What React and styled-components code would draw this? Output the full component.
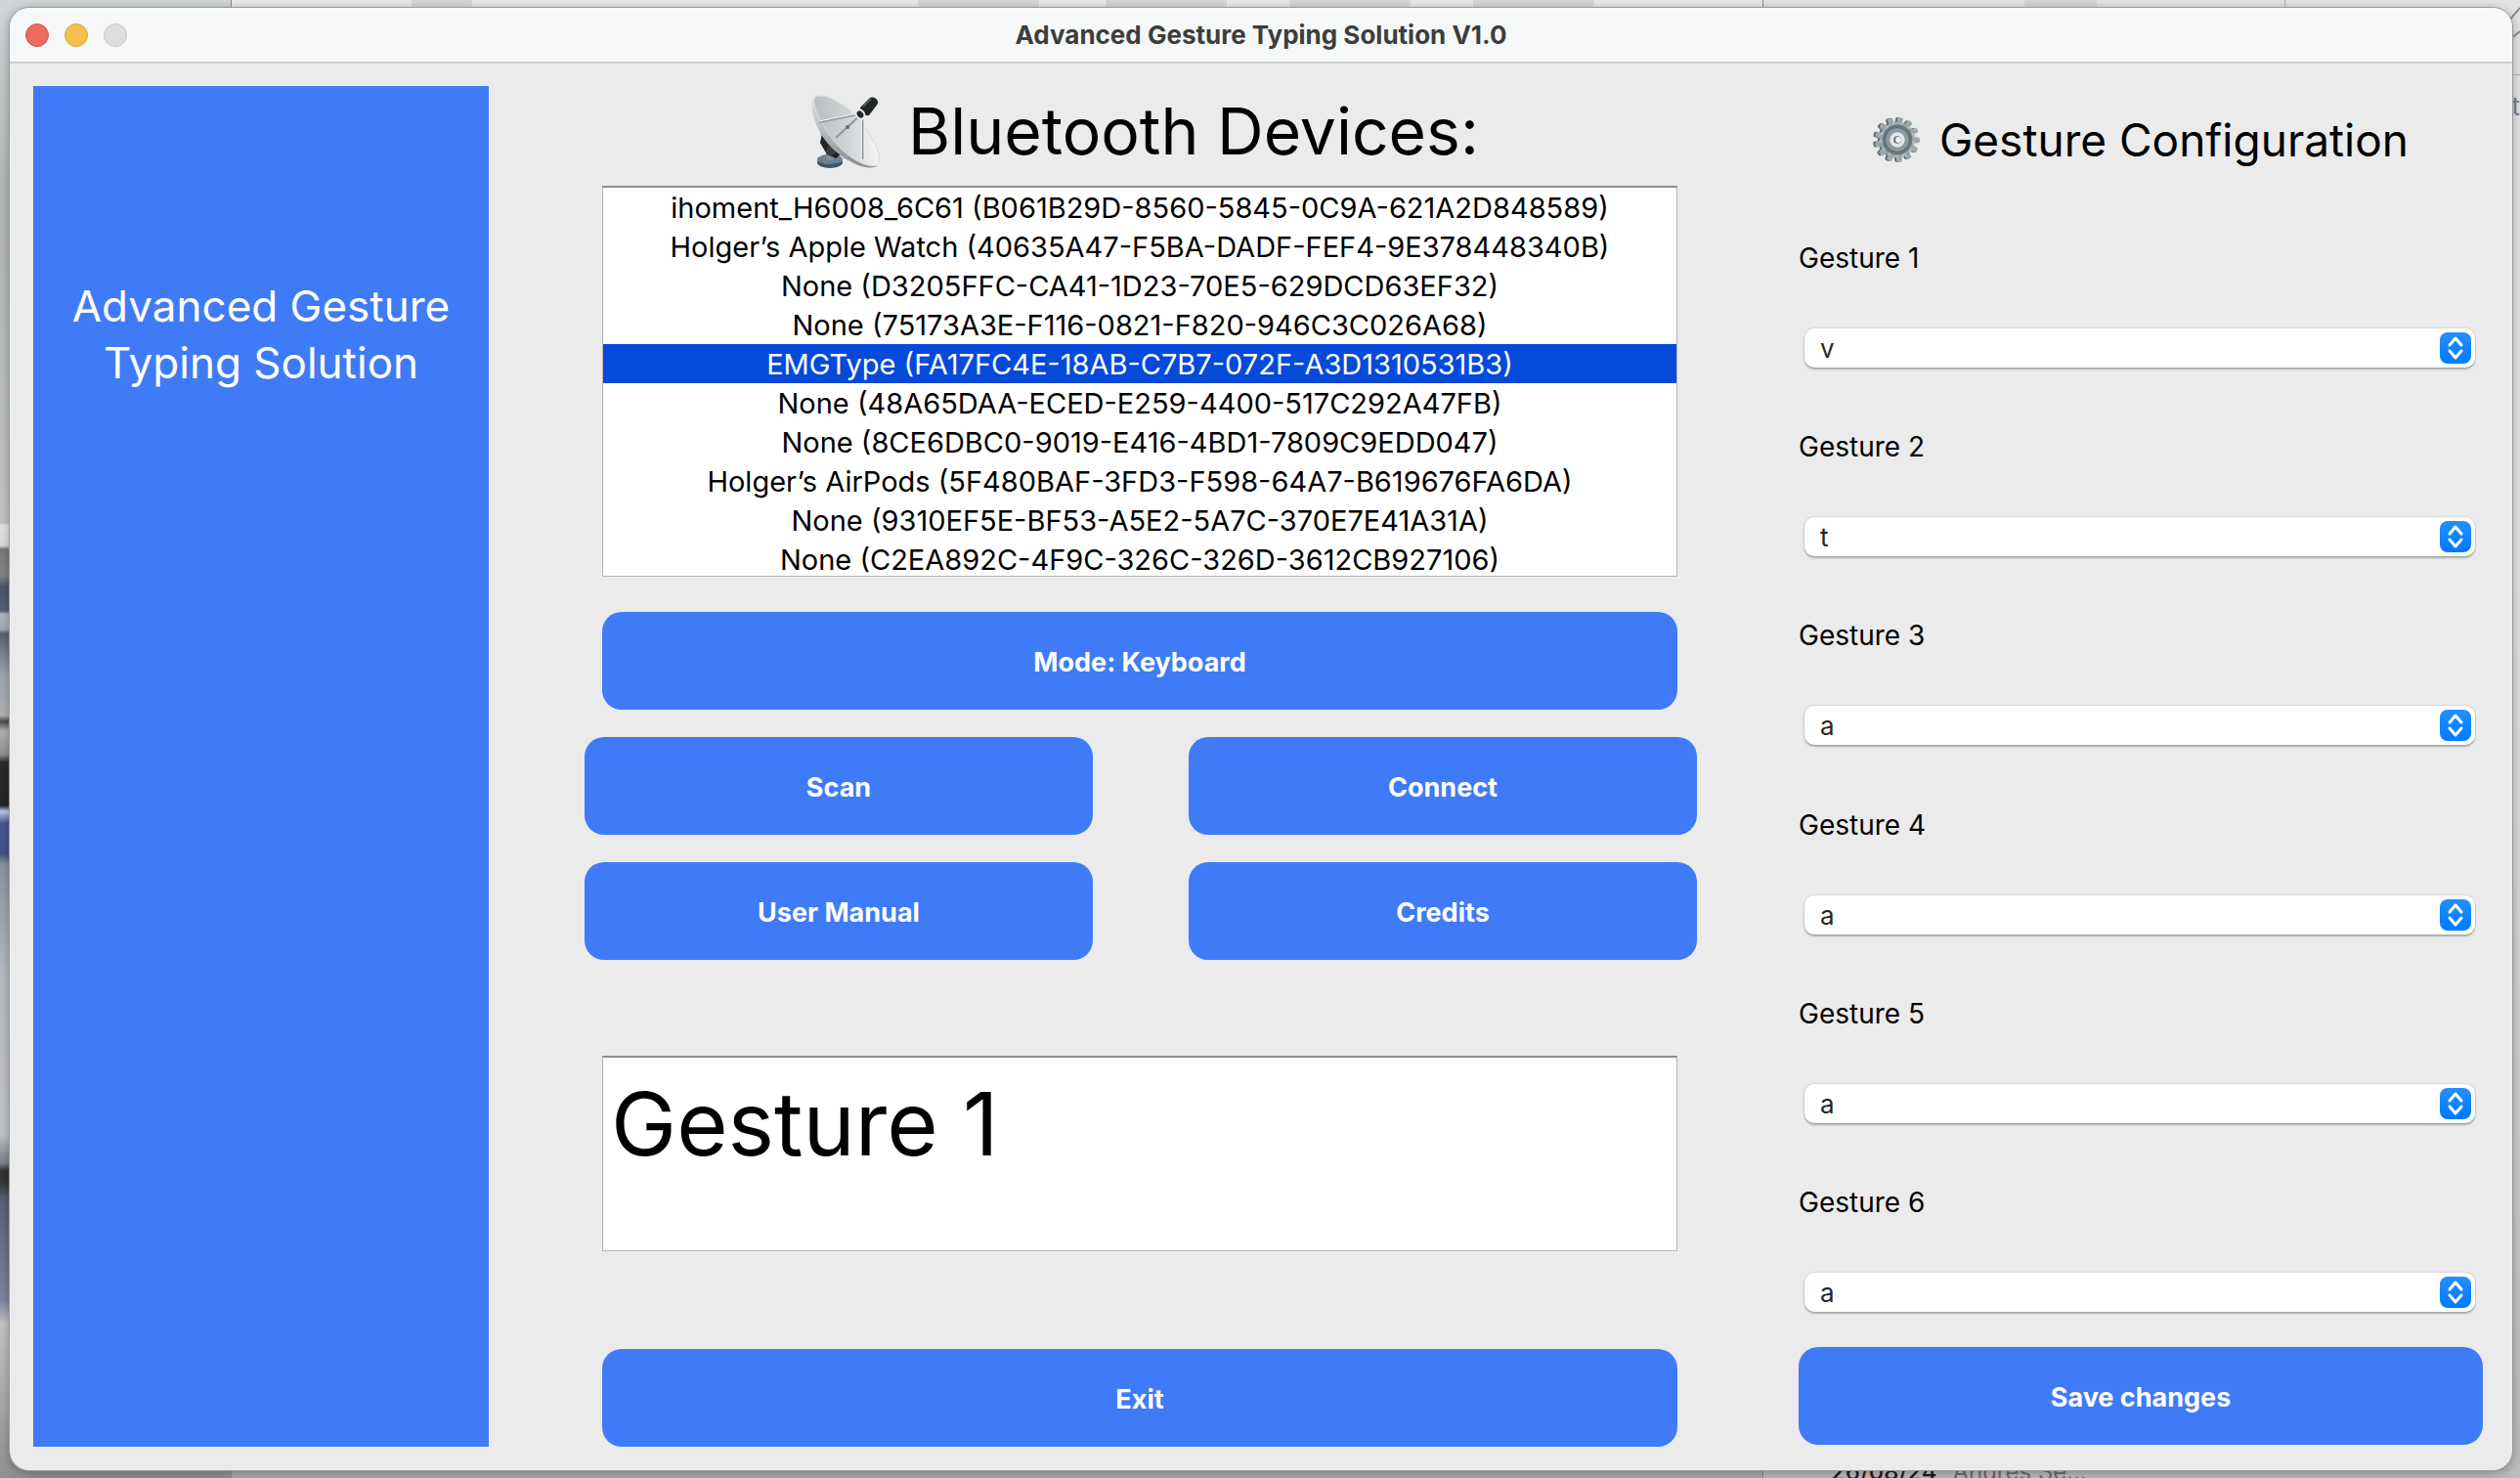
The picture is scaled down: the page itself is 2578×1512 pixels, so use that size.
import React from "react";
import styled, { createGlobalStyle } from "styled-components";

const GlobalStyle = createGlobalStyle`
  * { box-sizing: border-box; }
  body {
    margin: 0;
    font-family: Inter, "Noto Sans", sans-serif;
    color: #000;
    background: #b9bcbb;
  }
`;

const blue = "#3f7bf6";

const Desktop = styled.div`
  position: relative;
  min-height: 100vh;
  padding: 8px 8px 8px 10px;
  display: flex;
  overflow: hidden;
  background: linear-gradient(
    180deg,
    #d3d6d9 0px,
    #b4b8b8 200px,
    #c2c5c4 535px,
    #e4e6e6 537px,
    #dddfdf 558px,
    #77797a 562px,
    #85878a 588px,
    #4c5768 600px,
    #566174 625px,
    #b3b8c0 628px,
    #a5abb5 644px,
    #56616d 648px,
    #a0a6af 690px,
    #b1b3b5 732px,
    #4a4b4c 738px,
    #b0b2b4 748px,
    #8f9192 772px,
    #2a2b2c 780px,
    #252628 824px,
    #c7cdec 830px,
    #4a5791 842px,
    #46528a 874px,
    #8d95a0 884px,
    #b9bdc1 1000px,
    #c3c6c8 1160px,
    #7c8084 1190px,
    #2f3132 1198px,
    #383a3b 1212px,
    #59606f 1225px,
    #8085a0 1330px,
    #c4c6c5 1354px,
    #aeb1b0 1420px,
    #8f9191 1512px
  );
`;

const BackWindow = styled.div`
  position: absolute;
  top: 0;
  bottom: 0;
  left: ${(p) => p.$left};
  right: ${(p) => p.$right};
  border-left: 1px solid #8c8c8c;
  background: linear-gradient(180deg, ${(p) => p.$top} 0, ${(p) => p.$top} 40%, ${(p) => p.$bottom} 100%);
`;

const BackPill = styled.div`
  position: absolute;
  top: -32px;
  left: ${(p) => p.$left};
  width: ${(p) => p.$width};
  height: 48px;
  border-radius: 12px;
  background: #d6d9d8;
`;

const BackDivider = styled.div`
  position: absolute;
  top: 0;
  left: 533px;
  width: 1px;
  height: 8px;
  background: #b4b6b5;
`;

const BackRule = styled.div`
  position: absolute;
  top: 76px;
  right: 0;
  width: 8px;
  height: 1px;
  background: #b4b6b5;
`;

const BackMessage = styled.div`
  position: absolute;
  left: 69px;
  bottom: -8px;
  display: flex;
  gap: 16px;
  font-size: 24px;
  line-height: 28px;
  font-weight: 500;
  color: #1d1d1d;
  span + span { font-weight: 400; color: #6c6c6c; }
`;

const BackGlyph = styled.span`
  position: absolute;
  right: 0;
  top: 94px;
  font-size: 26px;
  line-height: 30px;
  color: #808080;
`;

const BackIcon = styled.svg`
  position: absolute;
  top: 6px;
  right: 0;
  width: 12px;
  height: 34px;
`;

const Window = styled.main`
  position: relative;
  flex: 1;
  min-width: 0;
  display: flex;
  flex-direction: column;
  overflow: hidden;
  border-radius: 20px;
  background: #ebebeb;
  box-shadow: 0 0 0 1px #9a9a9a, 0 2px 12px rgba(0, 0, 0, 0.35);
`;

const TitleBar = styled.header`
  display: grid;
  grid-template-columns: 1fr auto 1fr;
  align-items: center;
  height: 57px;
  padding: 0 16px;
  border-bottom: 2px solid #cbcdcc;
  background: #f6f8f7;
`;

const Lights = styled.div`
  display: flex;
  gap: 16px;
`;

const Light = styled.button`
  width: 24px;
  height: 24px;
  padding: 0;
  border: 1px solid ${(p) => p.$edge};
  border-radius: 50%;
  background: ${(p) => p.$fill};
`;

const WindowTitle = styled.h1`
  margin: 0;
  font-size: 26px;
  line-height: 32px;
  font-weight: 700;
  color: #3c3d3d;
`;

const Content = styled.div`
  flex: 1;
  display: grid;
  grid-template-columns: minmax(0, 466fr) minmax(0, 1138fr) minmax(0, 706fr);
  column-gap: 98px;
  padding: 23px 30px 24px 24px;
`;

const Sidebar = styled.aside`
  padding: 196px 24px 0;
  background: ${blue};
  color: #fff;
  font-size: 44px;
  line-height: 58px;
  text-align: center;
`;

const Center = styled.section`
  display: flex;
  flex-direction: column;
`;

const Inset = styled.div`
  display: flex;
  flex-direction: column;
  padding: 0 20px 0 18px;
`;

const DevicesHeading = styled.h2`
  display: flex;
  align-items: center;
  justify-content: center;
  gap: 28px;
  height: 102px;
  margin: 0;
  padding: 0 0 10px 8px;
  font-size: 66px;
  line-height: 92px;
  font-weight: 400;
`;

const DeviceList = styled.ul`
  height: 400px;
  margin: 0 0 36px;
  padding: 0;
  overflow: hidden;
  list-style: none;
  border: 1px solid #b4b4b4;
  border-top: 2px solid #8e8e8e;
  background: #fff;
`;

const Device = styled.li`
  height: 40px;
  font-size: 29px;
  line-height: 42px;
  text-align: center;
  white-space: nowrap;
  color: ${(p) => (p.$selected ? "#fff" : "#000")};
  background: ${(p) => (p.$selected ? "#064ad9" : "transparent")};
`;

const Button = styled.button`
  width: 100%;
  height: 100px;
  padding: 4px 0 0;
  border: 0;
  border-radius: 20px;
  background: ${blue};
  color: #fff;
  font: 700 27px/34px Inter, "Noto Sans", sans-serif;
`;

const ButtonGrid = styled.div`
  display: grid;
  grid-template-columns: 1fr 1fr;
  gap: 28px 98px;
  margin: 28px 0 98px;
`;

const Output = styled.textarea`
  display: block;
  width: 100%;
  height: 200px;
  margin: 0 0 100px;
  padding: 10px 8px;
  resize: none;
  outline: 0;
  border: 1px solid #b4b4b4;
  border-top: 2px solid #8e8e8e;
  border-radius: 0;
  background: #fff;
  color: #000;
  font: 400 90px/116px Inter, "Noto Sans", sans-serif;
`;

const Configuration = styled.form`
  display: flex;
  flex-direction: column;
  padding: 0 0 2px 6px;
`;

const ConfigHeading = styled.h2`
  display: flex;
  align-items: center;
  justify-content: center;
  gap: 18px;
  height: 160px;
  margin: 0;
  padding-bottom: 50px;
  font-size: 46px;
  line-height: 60px;
  font-weight: 400;
`;

const Fields = styled.div`
  flex: 1;
  display: flex;
  flex-direction: column;
  justify-content: space-between;
  margin-bottom: 36px;
`;

const Field = styled.div`
  display: flex;
  flex-direction: column;
  gap: 56px;
`;

const FieldLabel = styled.label`
  font-size: 28px;
  line-height: 32px;
`;

const SelectBox = styled.div`
  position: relative;
  margin: 0 8px 0 6px;
`;

const Select = styled.select`
  appearance: none;
  display: block;
  width: 100%;
  height: 40px;
  padding: 2px 44px 0 16px;
  border: 0;
  border-radius: 10px;
  background: #fff;
  box-shadow: 0 0 1px 1px rgba(0, 0, 0, 0.08), 0 2px 2px rgba(0, 0, 0, 0.25);
  color: #262626;
  font: 400 26px/36px Inter, "Noto Sans", sans-serif;
`;

const Stepper = styled.svg`
  position: absolute;
  top: 4px;
  right: 4px;
  width: 32px;
  height: 32px;
  pointer-events: none;
`;

function Dish() {
  return (
    <svg width="72" height="76" viewBox="0 0 72 76" aria-hidden="true">
      <defs>
        <linearGradient id="dish" x1="0" y1="0" x2="1" y2="0">
          <stop offset="0" stopColor="#b9bec1" />
          <stop offset="0.5" stopColor="#cfd3d5" />
          <stop offset="1" stopColor="#f4f5f6" />
        </linearGradient>
        <linearGradient id="rim" x1="0" y1="0" x2="0" y2="1">
          <stop offset="0" stopColor="#e4e6e7" />
          <stop offset="1" stopColor="#858b8e" />
        </linearGradient>
      </defs>
      <ellipse cx="20" cy="70" rx="13" ry="6" fill="#405464" />
      <ellipse cx="20" cy="67" rx="13" ry="5" fill="#6a8093" />
      <rect x="16" y="54" width="8" height="14" fill="#858c91" />
      <path d="M12 40l12 6 10 14-8 6-9-4-7-12z" fill="#1f2325" />
      <circle cx="21" cy="58" r="5" fill="#353b3e" />
      <path d="M4 3C-2 8 3 30 14 46C28 66 56 80 68 74L60 60L12 6Z" fill="url(#rim)" />
      <path d="M5 3C15-2 40 12 54 32C68 50 74 68 68 73C60 77 38 66 24 48C8 28 1 8 5 3Z" fill="url(#dish)" stroke="#d9dcdd" strokeWidth="1" />
      <path d="M9 29l40-8M26 45l26-24M54 24v43" fill="none" stroke="#8f9699" strokeWidth="2" />
      <path d="M9 28l40-8M55 24v43" fill="none" stroke="#f5f6f6" strokeWidth="1" />
      <circle cx="38" cy="34" r="2" fill="#60676a" />
      <path d="M51 14l10-10c4-2 9 2 8 6l-9 12c-4 1-9-3-9-8z" fill="#1f2625" />
      <path d="M54 13l8-8" stroke="#4f5b59" strokeWidth="2" />
      <ellipse cx="51" cy="21" rx="5" ry="6" transform="rotate(-35 51 21)" fill="#eceeee" />
      <ellipse cx="51" cy="21" rx="3" ry="4" transform="rotate(-35 51 21)" fill="#22292a" />
    </svg>
  );
}

function Gear() {
  return (
    <svg width="50" height="50" viewBox="0 0 52 52" aria-hidden="true">
      <defs>
        <linearGradient id="gear" x1="0" y1="0" x2="1" y2="1">
          <stop offset="0" stopColor="#a9b5ba" />
          <stop offset="0.5" stopColor="#96a2a8" />
          <stop offset="1" stopColor="#c4ccd0" />
        </linearGradient>
      </defs>
      {[["#5c666b", 24], ["url(#gear)", 26]].map(([fill, cx]) => (
        <g key={cx} fill={fill}>
          <circle cx={cx} cy="26" r="19" />
          {Array.from({ length: 13 }, (_, i) => (
            <rect key={i} x={cx - 3} y="2" width="6" height="9" rx="2" transform={`rotate(${(i * 360) / 13 + 8} ${cx} 26)`} />
          ))}
        </g>
      ))}
      <circle cx="26" cy="26" r="16" fill="#6a777d" />
      <circle cx="26" cy="26" r="13" fill="#8c999f" stroke="#56636a" strokeWidth="1" />
      <circle cx="26" cy="26" r="8" fill="#dfe4e6" />
      <circle cx="26" cy="26" r="4" fill="#5d686d" />
      <circle cx="27" cy="26" r="3" fill="#f1f2f2" />
    </svg>
  );
}

function Chevrons() {
  return (
    <Stepper viewBox="0 0 32 32" aria-hidden="true">
      <defs>
        <linearGradient id="step" x1="0" y1="0" x2="0" y2="1">
          <stop offset="0" stopColor="#2390ff" />
          <stop offset="1" stopColor="#007aff" />
        </linearGradient>
      </defs>
      <rect width="32" height="32" rx="8" fill="url(#step)" />
      <path d="M10 13l6-7 6 7M10 19l6 7 6-7" fill="none" stroke="#fff" strokeWidth="3" strokeLinecap="round" strokeLinejoin="round" />
    </Stepper>
  );
}

const devices = [
  "ihoment_H6008_6C61 (B061B29D-8560-5845-0C9A-621A2D848589)",
  "Holger’s Apple Watch (40635A47-F5BA-DADF-FEF4-9E378448340B)",
  "None (D3205FFC-CA41-1D23-70E5-629DCD63EF32)",
  "None (75173A3E-F116-0821-F820-946C3C026A68)",
  "EMGType (FA17FC4E-18AB-C7B7-072F-A3D1310531B3)",
  "None (48A65DAA-ECED-E259-4400-517C292A47FB)",
  "None (8CE6DBC0-9019-E416-4BD1-7809C9EDD047)",
  "Holger’s AirPods (5F480BAF-3FD3-F598-64A7-B619676FA6DA)",
  "None (9310EF5E-BF53-A5E2-5A7C-370E7E41A31A)",
  "None (C2EA892C-4F9C-326C-326D-3612CB927106)",
];

const gestures = ["v", "t", "a", "a", "a", "a"];

export default function App() {
  return (
    <Desktop>
      <GlobalStyle />
      <BackWindow $left="236px" $right="774px" $top="#ebebeb" $bottom="#acacac">
        <BackPill $left="184px" $width="62px" />
        <BackPill $left="702px" $width="124px" />
        <BackPill $left="894px" $width="124px" />
        <BackPill $left="1082px" $width="124px" />
        <BackPill $left="1270px" $width="124px" />
      </BackWindow>
      <BackWindow $left="1803px" $right="0" $top="#e3e5e4" $bottom="#bcbcbc">
        <BackPill $left="267px" $width="74px" />
        <BackDivider />
        <BackRule />
        <BackIcon viewBox="0 0 12 34" aria-hidden="true">
          <path d="M12 2L1 15M12 12a5 5 0 0 1 0 10M3 33l9-7" fill="none" stroke="#8b8d8c" strokeWidth="2" />
        </BackIcon>
        <BackMessage>
          <span>26/08/24</span>
          <span>Andres Se...</span>
        </BackMessage>
        <BackGlyph>t</BackGlyph>
      </BackWindow>
      <Window>
        <TitleBar>
          <Lights>
            <Light type="button" aria-label="Close" $fill="#ec6a5e" $edge="#d5574c" />
            <Light type="button" aria-label="Minimize" $fill="#f4bf4f" $edge="#d8a33c" />
            <Light type="button" aria-label="Zoom" $fill="#dcdedd" $edge="#c5c7c6" />
          </Lights>
          <WindowTitle>Advanced Gesture Typing Solution V1.0</WindowTitle>
        </TitleBar>
        <Content>
          <Sidebar>
            Advanced Gesture
            <br />
            Typing Solution
          </Sidebar>
          <Center>
            <DevicesHeading>
              <Dish />
              Bluetooth Devices:
            </DevicesHeading>
            <Inset>
              <DeviceList>
                {devices.map((name, i) => (
                  <Device key={name} $selected={i === 4}>
                    {name}
                  </Device>
                ))}
              </DeviceList>
              <Button type="button">Mode: Keyboard</Button>
            </Inset>
            <ButtonGrid>
              <Button type="button">Scan</Button>
              <Button type="button">Connect</Button>
              <Button type="button">User Manual</Button>
              <Button type="button">Credits</Button>
            </ButtonGrid>
            <Inset>
              <Output aria-label="Detected gesture" defaultValue="Gesture 1" spellCheck={false} />
              <Button type="button">Exit</Button>
            </Inset>
          </Center>
          <Configuration onSubmit={(e) => e.preventDefault()}>
            <ConfigHeading>
              <Gear />
              Gesture Configuration
            </ConfigHeading>
            <Fields>
              {gestures.map((value, i) => (
                <Field key={i}>
                  <FieldLabel htmlFor={`gesture-${i + 1}`}>Gesture {i + 1}</FieldLabel>
                  <SelectBox>
                    <Select id={`gesture-${i + 1}`} defaultValue={value}>
                      <option>{value}</option>
                    </Select>
                    <Chevrons />
                  </SelectBox>
                </Field>
              ))}
            </Fields>
            <Button type="submit">Save changes</Button>
          </Configuration>
        </Content>
      </Window>
    </Desktop>
  );
}
